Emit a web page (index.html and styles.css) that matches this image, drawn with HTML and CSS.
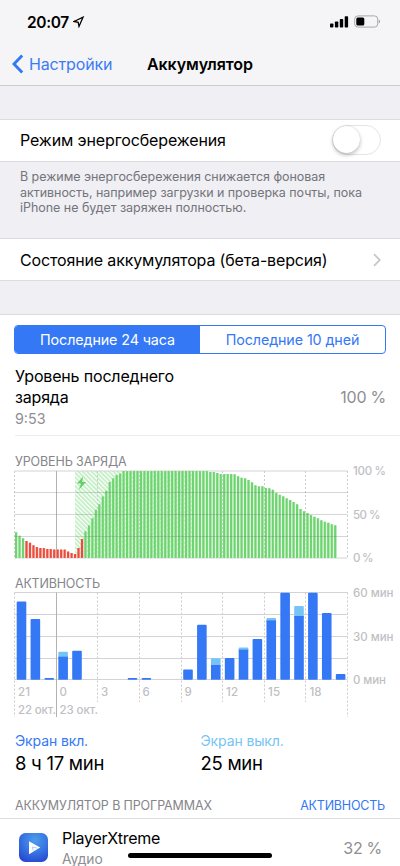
FILE: index.html
```html
<!DOCTYPE html>
<html lang="ru">
<head>
<meta charset="utf-8">
<title>Аккумулятор</title>
<link rel="stylesheet" href="styles.css">
</head>
<body>
<header class="header">
  <div class="status">
    <span class="clock">20:07</span>
    <svg class="location" width="12" height="12" viewBox="0 0 12 12"><path d="M1 5.5 10 1.2 6 10.4 5.2 6.3Z"/></svg>
    <svg class="signal" width="19" height="12" viewBox="0 0 19 12"><rect x="0" y="7.5" width="3.4" height="4" rx=".8"/><rect x="4.9" y="5.5" width="3.4" height="6" rx=".8"/><rect x="9.8" y="3" width="3.4" height="8.5" rx=".8"/><rect x="14.7" y=".3" width="3.4" height="11.2" rx=".8"/></svg>
    <svg class="battery" width="27" height="13" viewBox="0 0 27 13"><rect class="case" x=".7" y=".9" width="23" height="11.2" rx="3.2"/><rect x="2.3" y="2.5" width="8" height="8" rx="1.5"/><path class="cap" d="M24.7 4.6q1.4.4 1.4 1.9t-1.4 1.9z"/></svg>
  </div>
  <nav class="nav">
    <svg class="back" width="12" height="20" viewBox="0 0 12 20"><path d="M10.2 1.4 2 10l8.2 8.6"/></svg>
    <a class="back-text">Настройки</a>
    <h1 class="title">Аккумулятор</h1>
  </nav>
</header>

<main>
  <section class="row power">
    <span class="power-text">Режим энергосбережения</span>
    <span class="switch"><span class="knob"></span></span>
  </section>
  <p class="note">В режиме энергосбережения снижается фоновая<br>активность, например загрузки и проверка почты, пока<br>iPhone не будет заряжен полностью.</p>
  <section class="row health">
    <span class="health-text">Состояние аккумулятора (бета-версия)</span>
    <svg class="chevron" width="8" height="14" viewBox="0 0 8 14"><path d="M1 1.2 6.8 7 1 12.8"/></svg>
  </section>

  <section class="panel">
    <div class="segments">
      <span class="segment active">Последние 24 часа</span>
      <span class="segment">Последние 10 дней</span>
    </div>
    <div class="last">
      <div>
        <div class="last-title">Уровень последнего<br>заряда</div>
        <div class="last-time">9:53</div>
      </div>
      <span class="last-value">100 %</span>
    </div>
    <h2 class="caption level-caption">УРОВЕНЬ ЗАРЯДА</h2>
    <svg class="chart" id="level" width="400" height="100" viewBox="0 465 400 100">
      <defs>
        <pattern id="hatch" width="3.1" height="3.1" patternUnits="userSpaceOnUse" patternTransform="rotate(-45)"><rect width="1.9" height="3.1" fill="#c5f0c7"/></pattern>
      </defs>
    </svg>
    <h2 class="caption activity-caption">АКТИВНОСТЬ</h2>
    <svg class="chart" id="activity" width="400" height="132" viewBox="0 588 400 132"></svg>
    <div class="totals">
      <div class="total on"><span class="total-label">Экран вкл.</span><span class="total-value">8 ч 17 мин</span></div>
      <div class="total off"><span class="total-label">Экран выкл.</span><span class="total-value">25 мин</span></div>
    </div>
    <div class="apps-head"><h2 class="caption apps-caption">АККУМУЛЯТОР В ПРОГРАММАХ</h2><a class="apps-link">АКТИВНОСТЬ</a></div>
    <div class="app">
      <svg class="app-icon" width="29" height="29" viewBox="0 0 29 29">
        <defs><radialGradient id="ic" cx=".55" cy=".25" r=".8"><stop offset="0" stop-color="#4b9ceb"/><stop offset=".5" stop-color="#3977e2"/><stop offset="1" stop-color="#2648d2"/></radialGradient></defs>
        <rect width="29" height="29" rx="6.5" fill="url(#ic)"/>
        <path d="M10 8.2 21.2 14.6 10 21.2Z" fill="#fff"/>
        <path d="M13.2 14 18.5 15.2M13.2 14l1.3 4" stroke="#9dbdf0" stroke-width=".8" fill="none"/>
      </svg>
      <div class="app-text"><span class="app-name">PlayerXtreme</span><span class="app-sub">Аудио</span></div>
      <span class="app-value">32 %</span>
    </div>
  </section>
</main>
<div class="home"></div>
<script src="charts.js"></script>
</body>
</html>
```
FILE: styles.css
```css
* { box-sizing: border-box; }
body {
  margin: 0;
  width: 400px;
  height: 866px;
  overflow: hidden;
  position: relative;
  background: #efeff4;
  color: #000;
  font-family: Inter, "Liberation Sans", sans-serif;
  font-size: 16px;
  white-space: nowrap;
}
h1, h2, p { margin: 0; font-weight: 400; }
svg { display: block; flex: none; }

.header { height: 86px; background: #f5f5f7; border-bottom: 1px solid #cbcbd0; }
.status { display: flex; height: 43px; padding: 0 19px 0 27px; align-items: center; }
.clock { font-size: 15.5px; font-weight: 600; width: 42px; letter-spacing: -.35px; padding-top: 1px; }
.location { margin-left: 4px; }
.location path { fill: none; stroke: #000; stroke-width: 1.3; stroke-linejoin: miter; }
.signal { margin-left: auto; margin-right: 5px; }
.battery .case { fill: none; stroke: #a9a9ab; }
.battery .cap { fill: #a9a9ab; }
.nav { display: flex; height: 42px; align-items: center; padding-left: 12px; }
.back path { fill: none; stroke: #3478f6; stroke-width: 2.9; }
.back-text { color: #3b7cf5; margin-left: 5px; width: 118px; font-size: 16px; letter-spacing: -.15px; }
.title { font-size: 16px; font-weight: 600; letter-spacing: -.08px; }

.row { display: flex; justify-content: space-between; align-items: center; background: #fff; border: solid #dcdce0; border-width: 1px 0; padding: 0 19px 0 20px; }
.power { margin-top: 33px; height: 43px; }
.power-text { letter-spacing: -.13px; margin-top: -1px; }
.switch { width: 49px; height: 30px; border: 1.5px solid #e4e4e6; border-radius: 15px; margin-top: -1px; }
.knob { display: block; width: 27px; height: 27px; border-radius: 50%; background: #fff; box-shadow: 0 2px 4px rgba(0,0,0,.25), 0 0 1px rgba(0,0,0,.2); }
.note { height: 76px; padding: 7px 20px; color: #74747a; font-size: 12.5px; line-height: 15.6px; letter-spacing: -.04px; }
.health { height: 43px; }
.health-text { letter-spacing: -.15px; }
.chevron path { fill: none; stroke: #c7c7cc; stroke-width: 1.8; }

.panel { margin-top: 33px; height: 552px; background: #fff; border-top: 1px solid #dcdce0; padding-top: 10px; }
.segments { display: grid; grid-template-columns: 1fr 1fr; margin: 0 14px; height: 29px; border: 1px solid #3478f6; border-radius: 4px; overflow: hidden; }
.segment { color: #3478f6; font-size: 14.3px; line-height: 28px; text-align: center; letter-spacing: -.1px; }
.segment.active { background: #3478f6; color: #fff; }
.last { display: flex; justify-content: space-between; margin-left: 15px; padding: 12px 14px 0 0; height: 82px; border-bottom: 1px solid #ececee; }
.last-title { line-height: 21px; letter-spacing: -.17px; }
.last-time { color: #8e8e93; font-size: 14.3px; line-height: 21px; }
.last-value { color: #8e8e93; margin-top: 21px; letter-spacing: -.25px; }
.caption { color: #85858a; font-size: 12.5px; line-height: 16px; margin-left: 15px; letter-spacing: -.12px; }
.level-caption { margin-top: 18px; height: 11px; }
.activity-caption { margin-top: 11px; height: 12px; letter-spacing: -.2px; }
.chart { overflow: visible; }
.chart text { fill: #c0c0c4; font-size: 11.5px; font-weight: 500; }
.grid { stroke: #d3d3d5; stroke-width: 1; }
.overlay { stroke: #777; stroke-opacity: .3; stroke-width: 1; }
.dash { stroke: #cbcbd0; stroke-width: 1; stroke-dasharray: 2 2; }
.day { stroke: #b2b2b5; stroke-width: 1; }

.totals { display: flex; padding-left: 15px; margin-top: 12px; height: 66px; }
.total { width: 185.5px; display: flex; flex-direction: column; }
.total-label { font-size: 14px; line-height: 18px; letter-spacing: -.12px; }
.on .total-label { color: #3478f6; }
.off .total-label { color: #76c4f5; }
.total-value { font-size: 18.5px; line-height: 26px; letter-spacing: -.28px; }
.apps-head { display: flex; justify-content: space-between; padding-right: 15px; height: 21px; border-bottom: 1px solid #dedee1; }
.apps-link { color: #3478f6; font-size: 12.5px; line-height: 16px; letter-spacing: -.2px; }
.app { display: flex; padding: 9px 18px 0 19px; height: 48px; }
.app-icon { margin-top: 5px; }
.app-text { display: flex; flex-direction: column; margin-left: 14px; flex: 1; }
.app-name { line-height: 20px; letter-spacing: -.28px; }
.app-sub { color: #8e8e93; font-size: 13.8px; line-height: 22px; }
.app-value { color: #8e8e93; margin-top: 10px; letter-spacing: -.3px; }
.home { position: absolute; left: 128px; bottom: 8px; width: 144px; height: 5px; border-radius: 3px; background: #000; }
```
FILE: charts.js
```js
const NS = 'http://www.w3.org/2000/svg';
const LEFT = 14.5, WIDTH = 333, RIGHT = LEFT + WIDTH;

function add(parent, name, attrs, text) {
  const node = document.createElementNS(NS, name);
  for (const key in attrs) node.setAttribute(key, attrs[key]);
  if (text) node.textContent = text;
  parent.appendChild(node);
}
function line(svg, cls, x1, y1, x2, y2) {
  add(svg, 'line', { class: cls, x1, y1, x2, y2 });
}
function label(svg, x, y, text, width) {
  add(svg, 'text', { x, y, textLength: width, lengthAdjust: 'spacing' }, text);
}
function verticals(svg, top, bottom, dayBottom) {
  for (let i = 0; i <= 8; i++) {
    const x = Math.round(LEFT + i * WIDTH / 8 - .5) + .5;
    const edge = i === 0 || i === 8;
    line(svg, i === 1 ? 'day' : 'dash', x, top, x, edge || i === 1 ? dayBottom : bottom);
  }
}

// Charge level, one bar for each quarter of an hour.
const level = document.getElementById('level');
const levels = [25.7, 22.3, 19.7, 17, 15.3, 12.7, 11, 10, 10, 9, 9, 8.5, 8.5, 8.5, 8.5, 6.5, 5, 4, 10, 19,
  26.7, 32.7, 39.7, 48.3, 53.7, 61.7, 67.3, 76, 79.7, 83, 84.5]
  .concat(Array(25).fill(87))
  .concat([86, 86, 85, 84, 84, 84, 84, 83.7, 81.7, 80.3, 79.7, 78, 75.7, 72.7, 71.7, 71.7,
    70, 69.7, 68.3, 65, 63.3, 61.7, 59.7, 58, 56, 53.7, 49, 46.7, 45, 43, 41.3, 39.7, 37.7, 36.3, 35.3, 33.7, 32.7]);
add(level, 'rect', { x: 75, y: 471, width: 118.5, height: 87, fill: 'url(#hatch)' });
line(level, 'grid', LEFT, 471, RIGHT, 471);
line(level, 'grid', LEFT, 558, RIGHT, 558);
verticals(level, 471, 558, 558);
levels.forEach((h, i) => {
  const red = i > 2 && i < 20, x = 15 + i * WIDTH / 96;
  add(level, 'rect', { x, y: 558 - h, width: 2.7, height: h, fill: red ? '#f9c2bb' : '#c8f0c8' });
  add(level, 'rect', { x, y: 558 - h, width: 2.1, height: h, rx: .4, fill: red ? '#ea4d3d' : '#6dd46f' });
});
[492.5, 514.5, 536.5].forEach(y => line(level, 'overlay', LEFT, y, RIGHT, y));
add(level, 'path', { d: 'M83.2 476.5 77 483.5h4l-2.2 6.2 7.2-7.8h-4z', fill: '#62ce65' });
label(level, 353, 475, '100 %', 33);
label(level, 353, 518.5, '50 %', 27.5);
label(level, 353, 562, '0 %', 20.5);

// Hourly use in pixels: screen on, screen off.
const activity = document.getElementById('activity');
const hours = [[78.3], [60.7], [1.7], [23, 5], [29], [], [], [], [1.7], [1.7], [], [], [10.3], [55],
  [14.7, 6.8], [21.7], [30, 2.3], [40.7], [59.3, 2.4], [87], [63.7, 10], [87], [66.7], [5.7]];
[592.5, 614.5, 636.5, 658.5, 679.5].forEach(y => line(activity, 'grid', LEFT, y, RIGHT, y));
verticals(activity, 592.5, 702, 717);
hours.forEach(([on, off = 0], i) => {
  if (!on) return;
  const x = 16.7 + i * WIDTH / 24;
  if (off) add(activity, 'rect', { x, y: 679.7 - on - off, width: 9.6, height: off + 2, rx: 1, fill: '#76c4f5' });
  add(activity, 'rect', { x, y: 679.7 - on, width: 9.6, height: on, rx: off ? 0 : Math.min(1, on / 2), fill: '#3478f6' });
});
[['21', 18, 12], ['0', 59.5, 6.5], ['3', 101, 6.5], ['6', 142.5, 6.5], ['9', 184.5, 6.5],
  ['12', 226, 12], ['15', 268, 12], ['18', 309.5, 12]].forEach(([t, x, w]) => label(activity, x, 695.5, t, w));
label(activity, 18, 713.5, '22 окт.', 38);
label(activity, 59.5, 713.5, '23 окт.', 38.5);
label(activity, 353, 597, '60 мин', 40.5);
label(activity, 353, 640.5, '30 мин', 40.5);
label(activity, 353, 684, '0 мин', 33);
```
